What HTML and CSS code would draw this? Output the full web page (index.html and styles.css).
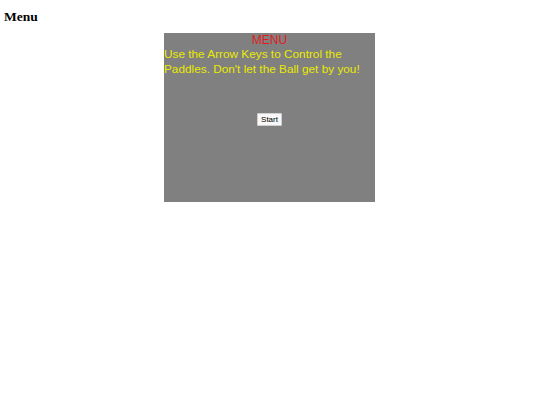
FILE: index.html
```html
<!DOCTYPE html>
<html>
<head>
<meta charset="utf-8">
<link rel="stylesheet" href="styles.css">
</head>
<body>
<h1 class="title">Menu</h1>
<div class="stage">
  <div class="menu-head">MENU</div>
  <p class="instructions">Use the Arrow Keys to Control the Paddles. Don't let the Ball get by you!</p>
  <div class="actions"><button class="start">Start</button></div>
</div>
</body>
</html>
```
FILE: styles.css
```css
html, body {
  margin: 0;
  padding: 0;
  background: #fff;
}
.title {
  font-family: "Liberation Serif", serif;
  font-size: 13.5px;
  font-weight: bold;
  line-height: 15px;
  margin: 9px 0 0 4px;
  height: 24px;
}
.stage {
  width: 211px;
  height: 169px;
  margin: 0 0 0 164px;
  background: #808080;
  font-family: "Liberation Sans", Arial, sans-serif;
}
.menu-head {
  color: #e01c1c;
  text-align: center;
  font-size: 12px;
  line-height: 13px;
  padding-top: 1px;
}
.instructions {
  margin: 0;
  color: #eaea00;
  font-size: 11.8px;
  line-height: 15px;
}
.actions {
  text-align: center;
  margin-top: 31px;
}
.start {
  font-family: "Liberation Sans", Arial, sans-serif;
  font-size: 8px;
  line-height: 9px;
  padding: 1px 3px;
  background: #f8f8f8;
  border: 1px solid #d0d0d0;
  border-radius: 1px;
  color: #000;
}
```
